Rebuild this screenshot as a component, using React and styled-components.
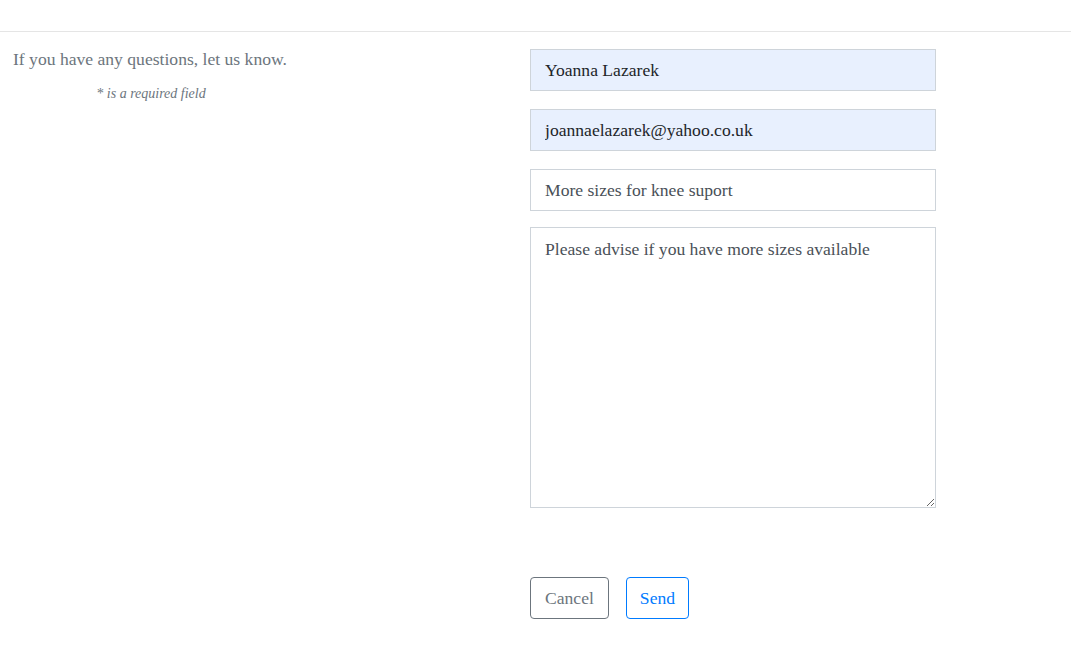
import styled, { createGlobalStyle } from "styled-components";

const serif = `"Liberation Serif", "Times New Roman", serif`;

const GlobalStyle = createGlobalStyle`
  body {
    margin: 0;
    background: #fff;
    font-family: ${serif};
  }
`;

const Page = styled.div`
  width: 1071px;
  height: 656px;
  overflow: hidden;
`;

const Rule = styled.hr`
  margin: 31px 0 0;
  border: 0;
  border-top: 1px solid #e5e5e5;
`;

const Layout = styled.div`
  display: grid;
  grid-template-columns: 530px 406px;
  padding-top: 17px;
`;

const Intro = styled.div`
  padding-left: 13px;
  margin-top: -1px;
`;

const Lead = styled.p`
  margin: 0;
  font-size: 17.6px;
  line-height: 22px;
  color: #6c757d;
`;

const Note = styled.p`
  margin: 16px 0 0;
  width: 276px;
  text-align: center;
  font-size: 14px;
  font-style: italic;
  color: #6c757d;
`;

const Form = styled.form`
  display: flex;
  flex-direction: column;
`;

const Field = styled.input`
  box-sizing: border-box;
  width: 100%;
  height: 42px;
  margin: 0 0 18px;
  padding: 0 14px;
  border: 1px solid #ced4da;
  background: ${(p) => (p.$filled ? "#e8f0fe" : "#fff")};
  color: ${(p) => (p.$filled ? "#212529" : "#495057")};
  font-family: ${serif};
  font-size: 17.6px;
  outline: none;
`;

const Message = styled.textarea`
  box-sizing: border-box;
  width: 100%;
  height: 281px;
  margin: -2px 0 0;
  padding: 10px 14px;
  border: 1px solid #ced4da;
  color: #495057;
  font-family: ${serif};
  font-size: 17.6px;
  line-height: 22px;
  resize: vertical;
  outline: none;
`;

const Actions = styled.div`
  display: flex;
  gap: 17px;
  margin-top: 69px;
`;

const Button = styled.button`
  height: 42px;
  padding: 0 ${(p) => (p.$primary ? "13px" : "14px")};
  border: 1px solid ${(p) => (p.$primary ? "#007bff" : "#6c757d")};
  border-radius: 4px;
  background: #fff;
  color: ${(p) => (p.$primary ? "#007bff" : "#6c757d")};
  font-family: ${serif};
  font-size: 17.6px;
  cursor: pointer;
`;

export default function App() {
  return (
    <Page>
      <GlobalStyle />
      <Rule />
      <Layout>
        <Intro>
          <Lead>If you have any questions, let us know.</Lead>
          <Note>* is a required field</Note>
        </Intro>
        <Form onSubmit={(e) => e.preventDefault()}>
          <Field $filled defaultValue="Yoanna Lazarek" />
          <Field $filled defaultValue="joannaelazarek@yahoo.co.uk" />
          <Field defaultValue="More sizes for knee suport" />
          <Message defaultValue="Please advise if you have more sizes available" />
          <Actions>
            <Button type="button">Cancel</Button>
            <Button type="submit" $primary>Send</Button>
          </Actions>
        </Form>
      </Layout>
    </Page>
  );
}
